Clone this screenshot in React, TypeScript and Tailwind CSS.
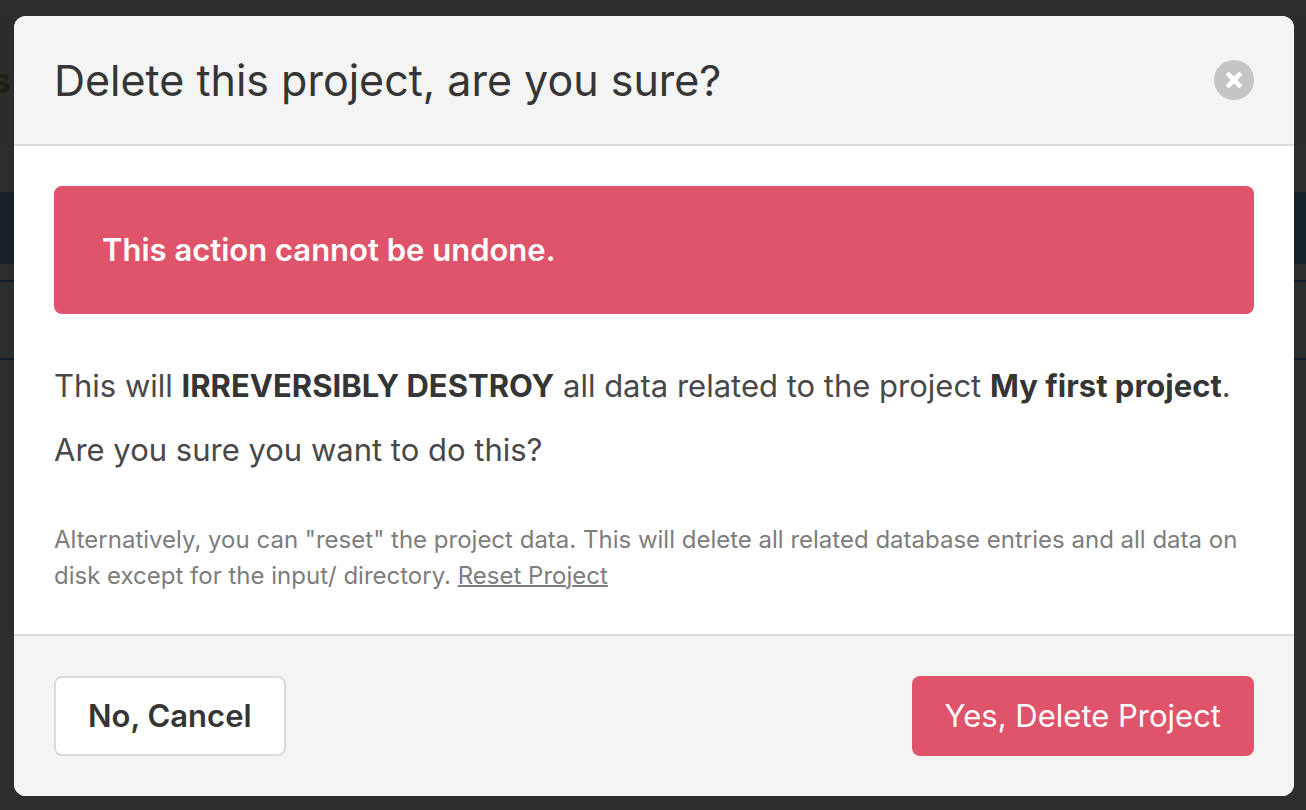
function Backdrop() {
  return (
    <div aria-hidden="true" className="col-start-1 row-start-1 flex flex-col overflow-hidden">
      <div className="h-4" />
      <div className="flex h-32 items-center bg-[#2e2c2a]">
        <span className="-ml-2 text-[34px] font-bold text-[#201e10]">s</span>
      </div>
      <div className="mt-12 h-[72px] bg-[#162028]" />
      <div className="mt-4 h-20 border-y-2 border-[#141c2c]" />
    </div>
  );
}

export default function App() {
  return (
    <div className="grid min-h-screen grid-cols-1 bg-[#2d2d2d] font-['Inter',sans-serif]">
      <Backdrop />
      <div className="z-10 col-start-1 row-start-1 pt-4 pr-3 pb-3 pl-3.5">
        <section
          role="dialog"
          aria-modal="true"
          aria-labelledby="dialog-title"
          className="overflow-hidden rounded-xl bg-white text-[#353535]"
        >
          <header className="flex items-center justify-between border-b-2 border-[#dadada] bg-[#f4f4f4] px-10 py-8">
            <h1 id="dialog-title" className="text-[43px] leading-16">
              Delete this project, are you sure?
            </h1>
            <button
              type="button"
              aria-label="Close"
              className="flex size-10 items-center justify-center rounded-full bg-[#c5c5c5] text-white"
            >
              <svg viewBox="0 0 40 40" className="size-10" stroke="currentColor" strokeWidth="4.6" fill="none">
                <path d="M13.2 13.2 26.8 26.8M26.8 13.2 13.2 26.8" />
              </svg>
            </button>
          </header>

          <div className="px-10 pt-10 pb-10">
            <p className="rounded-lg bg-[#df546b] px-12 py-8 text-[31px] leading-16 font-semibold text-white">
              This action cannot be undone.
            </p>
            <p className="mt-10 text-[31px] leading-16 text-[#484848]">
              This will <strong className="font-bold text-[#353535]">IRREVERSIBLY DESTROY</strong> all data related to
              the project <strong className="font-bold text-[#353535]">My first project</strong>.
              <br />
              Are you sure you want to do this?
            </p>
            <p className="mt-10 text-2xl leading-9 text-[#7d7d7d]">
              Alternatively, you can "reset" the project data. This will delete all related database entries and all
              data on disk except for the input/ directory.{" "}
              <a href="#reset" className="underline decoration-2">
                Reset Project
              </a>
            </p>
          </div>

          <footer className="flex items-center justify-between border-t-2 border-[#dadada] bg-[#f4f4f4] p-10">
            <button
              type="button"
              className="h-20 rounded-lg border-2 border-[#dadada] bg-white px-8 text-[31px] font-semibold"
            >
              No, Cancel
            </button>
            <button type="button" className="h-20 rounded-lg bg-[#df546b] px-[33px] text-[31px] text-white">
              Yes, Delete Project
            </button>
          </footer>
        </section>
      </div>
    </div>
  );
}
